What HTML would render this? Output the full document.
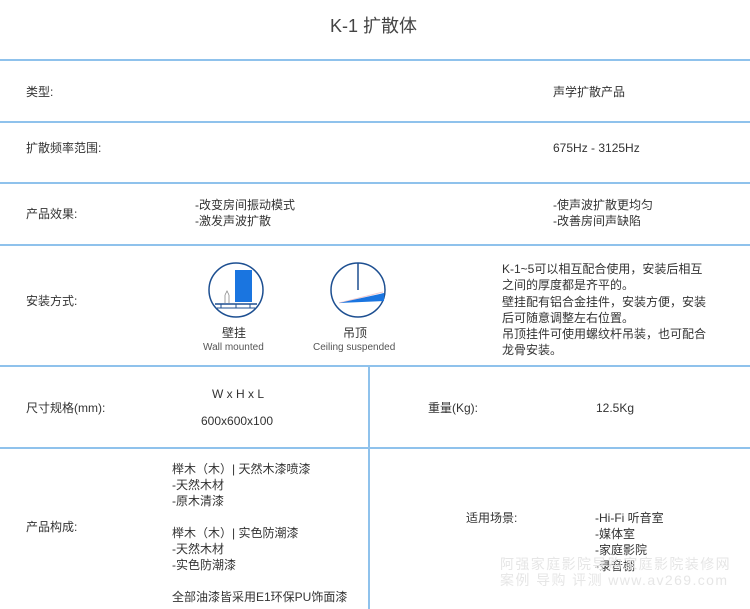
<!DOCTYPE html>
<html><head><meta charset="utf-8"><style>
body{margin:0;width:750px;height:609px;background:#fff;position:relative;overflow:hidden;font-family:"Liberation Sans","Noto Sans CJK SC",sans-serif;color:#333;font-size:12px}
.h{position:absolute;left:0;width:750px;height:2px;background:#8fc2ec}
.v{position:absolute;width:2px;background:#8fc2ec}
.t{position:absolute;line-height:16px;white-space:nowrap}
.wm{position:absolute;color:#e6e6e6;font-size:14px;line-height:16px;letter-spacing:1.4px;white-space:nowrap}
</style></head><body>
<div class="t" style="left:330px;top:15px;font-size:18px;line-height:22px;color:#444">K-1 扩散体</div>
<div class="h" style="top:59px"></div>
<div class="h" style="top:121px"></div>
<div class="h" style="top:182px"></div>
<div class="h" style="top:244px"></div>
<div class="h" style="top:365px"></div>
<div class="h" style="top:447px"></div>
<div class="v" style="left:368px;top:365px;height:244px"></div>

<div class="t" style="left:26px;top:84px">类型:</div>
<div class="t" style="left:553px;top:84px">声学扩散产品</div>
<div class="t" style="left:26px;top:140px">扩散频率范围:</div>
<div class="t" style="left:553px;top:140px">675Hz - 3125Hz</div>
<div class="t" style="left:26px;top:206px">产品效果:</div>
<div class="t" style="left:195px;top:197px">-改变房间振动模式<br>-激发声波扩散</div>
<div class="t" style="left:553px;top:197px">-使声波扩散更均匀<br>-改善房间声缺陷</div>
<div class="t" style="left:26px;top:293px">安装方式:</div>

<svg style="position:absolute;left:207px;top:261px" width="58" height="58" viewBox="0 0 58 58">
<circle cx="29" cy="29" r="27" fill="none" stroke="#1d4f91" stroke-width="1.5"/>
<rect x="28" y="9" width="17" height="32" fill="#1a75e0"/>
<line x1="8" y1="43" x2="50" y2="43" stroke="#1d4f91" stroke-width="1.5"/>
<line x1="10" y1="47" x2="48" y2="47" stroke="#1d4f91" stroke-width="1"/>
<line x1="14" y1="43" x2="14" y2="47" stroke="#1d4f91"/><line x1="29" y1="43" x2="29" y2="47" stroke="#1d4f91"/><line x1="43" y1="43" x2="43" y2="47" stroke="#1d4f91"/>
<path d="M18 42 L18 34 M22 42 L22 34 M18 34 L20 30 L22 34" stroke="#888" fill="none" stroke-width="0.8"/>
</svg>
<div class="t" style="left:222px;top:325px;font-size:12px">壁挂</div>
<div class="t" style="left:203px;top:340px;font-size:10px;color:#555">Wall mounted</div>

<svg style="position:absolute;left:329px;top:261px" width="58" height="58" viewBox="0 0 58 58">
<circle cx="29" cy="29" r="27" fill="none" stroke="#1d4f91" stroke-width="1.5"/>
<line x1="29" y1="2" x2="29" y2="29" stroke="#1d4f91" stroke-width="1.5"/>
<line x1="10" y1="42" x2="54" y2="31" stroke="#f0c8d0" stroke-width="1"/>
<path d="M10 42 L55 32 L55 40 Z" fill="#1a75e0"/>
</svg>
<div class="t" style="left:343px;top:325px;font-size:12px">吊顶</div>
<div class="t" style="left:313px;top:340px;font-size:10px;color:#555">Ceiling suspended</div>

<div class="t" style="left:502px;top:261px;line-height:16.3px">K-1~5可以相互配合使用，安装后相互<br>之间的厚度都是齐平的。<br>壁挂配有铝合金挂件，安装方便，安装<br>后可随意调整左右位置。<br>吊顶挂件可使用螺纹杆吊装，也可配合<br>龙骨安装。</div>

<div class="t" style="left:26px;top:400px">尺寸规格(mm):</div>
<div class="t" style="left:212px;top:386px">W x H x L</div>
<div class="t" style="left:201px;top:413px">600x600x100</div>
<div class="t" style="left:428px;top:400px">重量(Kg):</div>
<div class="t" style="left:596px;top:400px">12.5Kg</div>

<div class="t" style="left:26px;top:519px">产品构成:</div>
<div class="t" style="left:172px;top:461px">榉木（木）| 天然木漆喷漆<br>-天然木材<br>-原木清漆<br><br>榉木（木）| 实色防潮漆<br>-天然木材<br>-实色防潮漆<br><br>全部油漆皆采用E1环保PU饰面漆</div>
<div class="t" style="left:466px;top:510px">适用场景:</div>
<div class="t" style="left:595px;top:510px">-Hi-Fi 听音室<br>-媒体室<br>-家庭影院<br>-录音棚</div>
<div class="wm" style="left:500px;top:556px">阿强家庭影院导购家庭影院装修网</div>
<div class="wm" style="left:500px;top:572px">案例 导购 评测 www.av269.com</div>
</body></html>
